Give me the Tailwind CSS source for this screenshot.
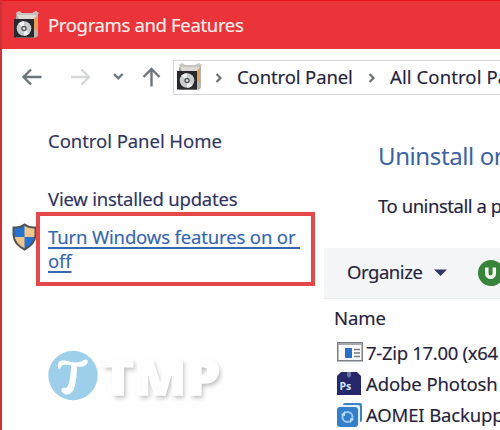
<!DOCTYPE html>
<html lang="en">
<head>
<meta charset="utf-8">
<title>Programs and Features</title>
<script src="https://cdn.jsdelivr.net/npm/@tailwindcss/browser@4"></script>
</head>
<body class="w-[500px] h-[430px] overflow-hidden bg-[#fefefe] font-['Noto_Sans','Open_Sans',sans-serif] text-[18.5px] leading-[24px] text-[#25233c] whitespace-nowrap [-webkit-text-stroke:0.15px]">
<svg class="hidden">
  <symbol id="box" viewBox="0 0 26 28">
    <path d="M2 2 5 0 8 2H18L22 0 25 2 23 5H3z" fill="#c7c3bf"/>
    <path d="M2 4H24L23 26 20 27H2z" fill="#aaa7a2"/>
    <path d="M19 5 24 3V25L19 27z" fill="#b9b4ad"/>
    <path d="M18 6 23 6V21L19 15z" fill="#e69a5b"/>
    <path d="M3 4H23L20 8H5z" fill="#dedbd7"/>
    <rect x="0" y="8" width="20" height="18.500" fill="#29292d"/>
    <circle cx="10" cy="17.500" r="7.300" fill="#c9cdcf"/>
    <path d="M10 17.500 4.500 12.500A7.300 7.300 0 0 1 10 10.200zM10 17.500 15.500 22.500A7.300 7.300 0 0 1 10 24.800z" fill="#f0f1f1"/>
    <circle cx="10" cy="17.500" r="2.700" fill="#55585c"/>
    <circle cx="10" cy="17.500" r="1.200" fill="#e9e9e9"/>
  </symbol>
</svg>
<div class="relative w-[500px] h-[430px] overflow-hidden border-l-2 border-[#cf3139] flex flex-col">
  <header class="h-[49px] shrink-0 -ml-0.5 bg-[#eb333a] border-t border-[#e71820] flex items-center pl-[14px] text-[#fff0ed]">
    <svg class="w-[26px] h-[28px] shrink-0"><use href="#box"/></svg>
    <span class="ml-2 tracking-[-0.35px]">Programs and Features</span>
  </header>
  <nav class="h-[57px] shrink-0 flex items-start pt-[11px]">
    <svg class="w-[171px] h-[34px] shrink-0" fill="none" stroke="#6c777b" stroke-width="2.4">
      <path d="M39.500 17H21.500M29 9.500 21.500 17 29 24.500"/>
      <path d="M69 17H87M79.500 9.500 87 17 79.500 24.500" stroke="#d6d8d8"/>
      <path d="M112 14 116.300 18.300 120.600 14"/>
      <path d="M149.500 26.500V9M141.500 17 149.500 9 157.500 17"/>
    </svg>
    <div class="w-[340px] h-[35px] shrink-0 border border-[#d3d5d8] flex items-center pl-[3px]">
      <svg class="w-[26px] h-[28px] -mt-[2px] shrink-0"><use href="#box"/></svg>
      <svg class="w-[8px] h-[12px] ml-[12px] shrink-0" fill="none" stroke="#6c7174" stroke-width="2.2"><path d="M1.500 2 5.500 6 1.500 10"/></svg>
      <span class="ml-[14px] w-[117px] -mt-[1px] tracking-[-0.12px]">Control Panel</span>
      <svg class="w-[8px] h-[12px] ml-[14px] shrink-0" fill="none" stroke="#6c7174" stroke-width="2.2"><path d="M1.500 2 5.500 6 1.500 10"/></svg>
      <span class="ml-[14px] -mt-[1px] tracking-[0.1px]">All Control Pa</span>
    </div>
  </nav>
  <div class="flex grow">
    <aside class="w-[322px] shrink-0 pl-[46px] pt-[23px] text-[#30345e]">
      <p class="tracking-[-0.05px]">Control Panel Home</p>
      <p class="mt-[34px] tracking-[-0.22px]">View installed updates</p>
      <div class="flex -ml-[36px] mt-[14px]">
        <svg class="w-[25px] h-[28px] -mt-[2px] shrink-0" viewBox="0 0 25 28">
          <path d="M12.500 1.500Q17 5 23.500 4.500V12Q23 21 12.500 26.500 2 21 1.500 12V4.500Q8 5 12.500 1.500z" fill="#efc68c"/>
          <path d="M12.500 1.500V14H1.500V4.500Q8 5 12.500 1.500zM12.500 14H23Q22 22 12.500 26.500z" fill="#2872cf"/>
          <path d="M12.500 1.500Q17 5 23.500 4.500V12Q23 21 12.500 26.500 2 21 1.500 12V4.500Q8 5 12.500 1.500z" fill="none" stroke="#4f5358" stroke-width="2"/>
        </svg>
        <a class="ml-[11px] text-[#3566b0] tracking-[-0.15px] underline decoration-[1.5px] underline-offset-3">Turn Windows features on or&nbsp;<br>off</a>
      </div>
    </aside>
    <main class="w-[178px] shrink-0 pt-[36px]">
      <h1 class="pl-[54px] text-[24px] leading-[28px] text-[#3c62a0] tracking-[-0.4px] [-webkit-text-stroke:0]">Uninstall or</h1>
      <p class="pl-[54px] mt-[24px] tracking-[-0.45px]">To uninstall a p</p>
      <div class="mt-[30px] h-[51px] bg-[#f4f5f6] border-b border-[#e9eaeb] flex items-center pl-[23px]">
        <span class="w-[76px] -mt-[2px] tracking-[-0.45px]">Organize</span>
        <svg class="w-[13px] h-[8px] ml-[12px] -mt-[1px] shrink-0"><path d="M0 .5H13L6.500 7z" fill="#303765"/></svg>
        <svg class="w-[28px] h-[28px] ml-[30px] -mt-[1px] shrink-0"><circle cx="14" cy="14" r="13" fill="#37853b"/><path d="M9.800 8.500V14.500a3.500 3.500 0 0 0 7.500 0V8.500" fill="none" stroke="#f5faf3" stroke-width="3.500"/></svg>
      </div>
      <p class="pl-[10px] mt-[7px] tracking-[-0.1px]">Name</p>
      <ul class="mt-[7px] pl-[13px]">
        <li class="h-[31px] flex items-center">
          <svg class="w-[26px] h-[26px] shrink-0"><rect x=".75" y="2.750" width="24.500" height="18" fill="#fafafa" stroke="#7b8086" stroke-width="1.500"/><path d="M1 4H25" stroke="#a5a8ad" stroke-width="2"/><rect x="8" y="8" width="7" height="10" fill="#2870c8"/><path d="M17 9.500H23M17 13H23M17 16.500H23" stroke="#777c82" stroke-width="1.300"/></svg>
          <span class="ml-[3px] tracking-[-0.3px]">7-Zip 17.00 (x64</span>
        </li>
        <li class="h-[31px] flex items-center">
          <svg class="w-[26px] h-[26px] shrink-0"><path d="M0 5 4 1H20L24 5V24H0z" fill="#25286a"/><path d="M10 1H14V5L12 7 10 5z" fill="#6c73a4"/><text x="2.500" y="18.500" font-family="Open Sans" font-size="10.500" font-weight="700" fill="#d9e7ff">Ps</text></svg>
          <span class="ml-[3px] tracking-[-0.1px]">Adobe Photosh</span>
        </li>
        <li class="h-[31px] flex items-center">
          <svg class="w-[26px] h-[26px] shrink-0"><rect x="6" y="1" width="19" height="19" rx="2" fill="#3b84cc"/><rect x="4" y="3" width="19" height="19" rx="2" fill="#e3f0fb"/><rect x="0" y="5" width="21" height="20" rx="3" fill="#347fc9"/><circle cx="10.500" cy="15" r="5" fill="none" stroke="#9ccbef" stroke-width="2"/><path d="M4 13 8 9V14zM17 17 13 21V16z" fill="#b9dcf5"/></svg>
          <span class="ml-[3px] tracking-[-0.15px]">AOMEI Backupp</span>
        </li>
      </ul>
    </main>
  </div>
  <div class="absolute left-[34px] top-[212px] w-[279px] h-[74px] border-4 border-[#e5474b]"></div>
  <div class="absolute left-[45px] top-[349px] flex items-center">
    <svg class="w-[52px] h-[51px] shrink-0"><circle cx="26" cy="25.500" r="24.700" fill="#9dcfea"/><path d="M11 17C10 11 15 9 20 11 27 13 33 13 37 10 41 8 42 12 39 15 36 17 33 17 30 16.500 30 24 29 33 27 39 25 45 17 46 15 42 13 38 17 37 19 38 22 37 24 25 24 15.500 20 14 15 14 14 17 13 20 11 19 11 17z" fill="#fdfefe"/></svg>
    <span class="ml-[3px] h-[52px] leading-[54px] origin-left scale-x-[1.08] font-black text-[50px] text-[#fefefe] [-webkit-text-stroke:1.5px_#fefefe] [text-shadow:2px_3px_4px_rgb(0_0_0_/_0.25)]">TMP</span>
  </div>
</div>
</body>
</html>
